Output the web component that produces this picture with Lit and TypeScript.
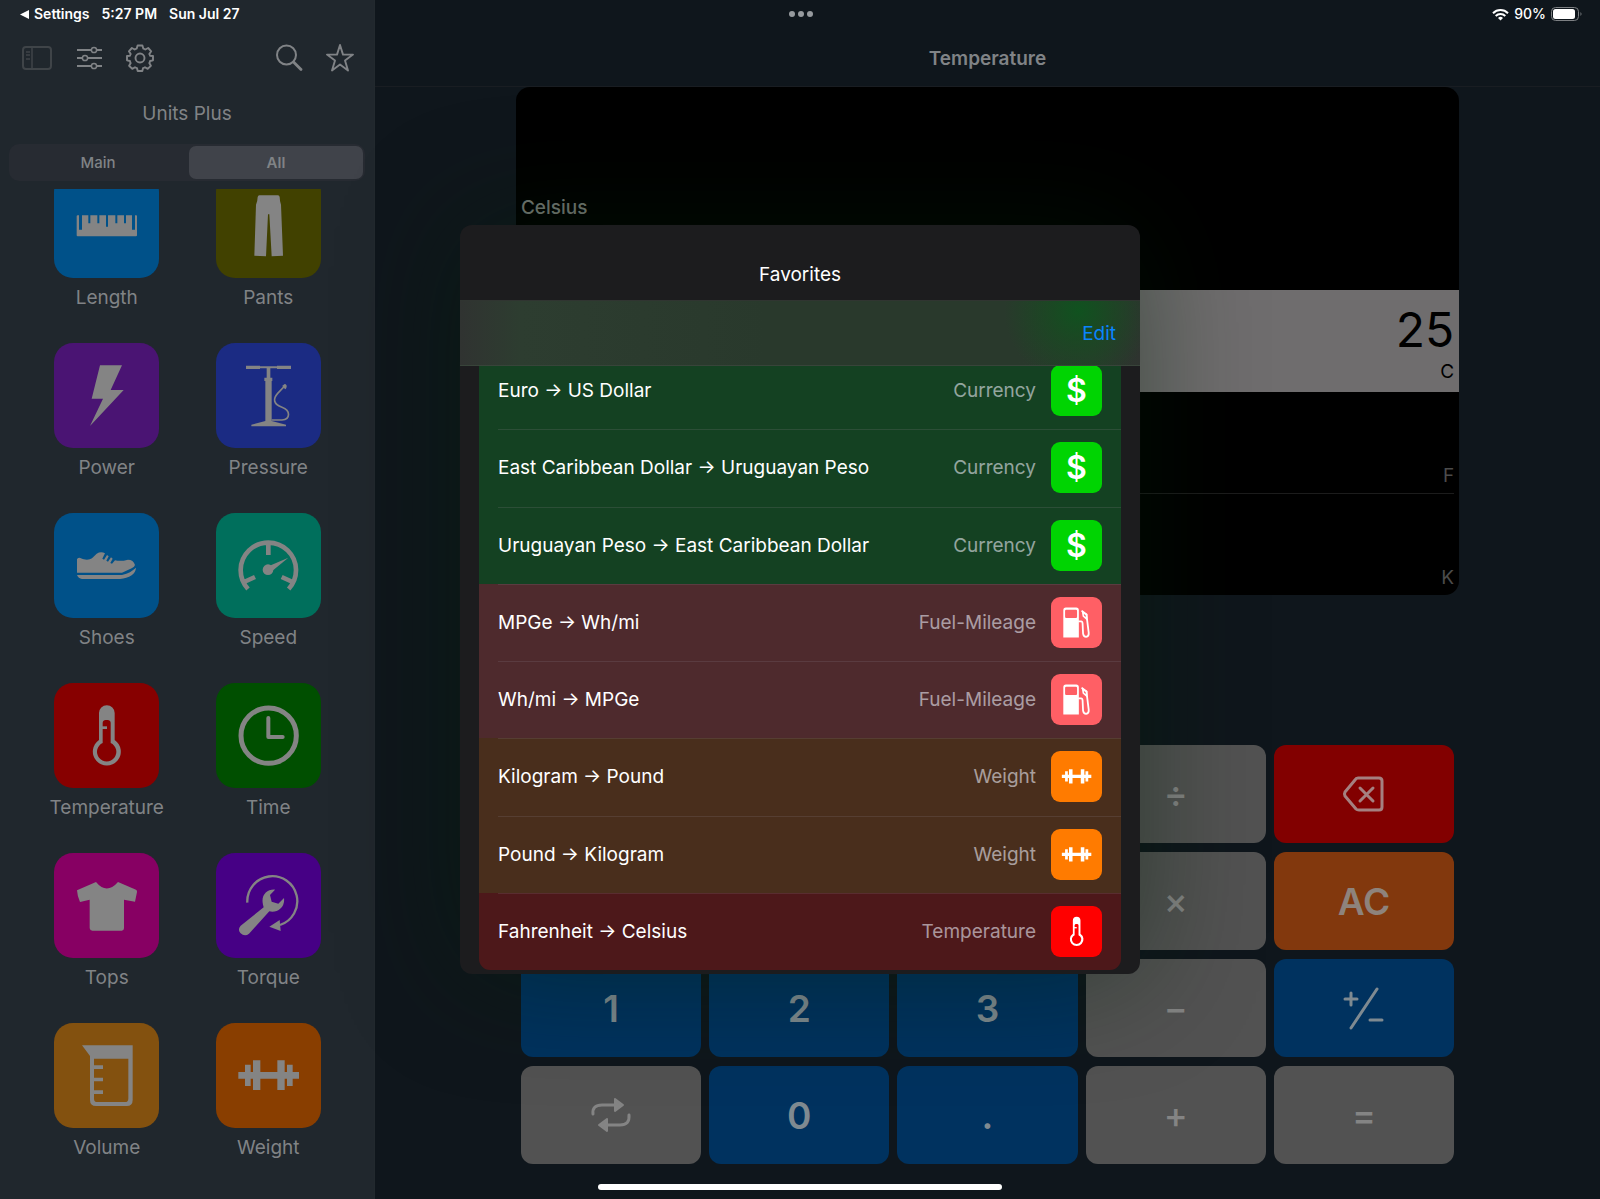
import { LitElement, html, css, svg, nothing, type TemplateResult, type SVGTemplateResult } from "lit";
import { customElement, property, state } from "lit/decorators.js";
import { classMap } from "lit/directives/class-map.js";

/* Glyphs share a 315-unit square, the same proportions on tiles and badges. */
const GLYPHS: Record<string, SVGTemplateResult> = {
  length: svg`<path d="M71 127H75V170H84V127H103V151H109V127H130V151H136V127H156V161H162V127H184V151H190V127H210V151H216V127H234V170H243V127H247Q249 127 249 130V187Q249 190 246 190H71Q68 190 68 187V130Q68 127 71 127Z"/>`,
  pants: svg`<path d="M130 67H186Q190 68 191 72Q191 82 195 95L201 248L167 250L160 124H156L150 250L115 248L120 95Q125 82 125 72Q126 68 130 67Z"/>`,
  power: svg`<path d="M138 67H204L170 141H209L108 249L147 167H113Z"/>`,
  pressure: svg`<path d="M90 68H132V70H183V68H225V78H183V76H163V104H169V114H167V234L210 245V250H106V245L148 234V114H145V104H152V76H132V78H90Z"/>
    <path d="M167 231H198C224 229 224 202 198 193C172 184 170 168 185 151L206 129" fill="none" stroke="currentColor" stroke-width="5"/>
    <path d="M199 128L206 123Q213 124 212 132L209 139L202 134Z"/>`,
  shoes: svg`<path d="M69 139Q71 133 79 135C93 142 106 141 114 136L128 122Q141 114 153 121L150 127L145 137L150 140L159 126L164 130L157 143L162 146L171 133L176 137L169 150L174 152L183 142Q200 146 222 140Q238 140 243 156Q242 162 233 166L204 179H69Z"/>
    <path d="M69 186H204C223 182 235 174 246 164Q245 178 233 187Q218 197 198 198H84Q73 196 69 186Z"/>`,
  speed: svg`<path d="M96 228A83 83 0 1 1 218 228M157 84V126M84 207L117 192M230 207L197 192" fill="none" stroke="currentColor" stroke-width="14"/>
    <circle cx="156" cy="170" r="16"/><path d="M152 162L217 134L164 178Z"/>`,
  temperature: svg`<path fill-rule="evenodd" d="M135 90A23 23 0 0 1 182 90V171A42 42 0 1 1 135 171ZM146 119V180A29 29 0 1 0 170 180V119Q169 111 161 111H155Q147 111 146 119Z"/><rect x="142" y="130" width="17" height="8"/>`,
  time: svg`<circle cx="158" cy="158" r="83" fill="none" stroke="currentColor" stroke-width="15"/>
    <path d="M157 105V162H200" fill="none" stroke="currentColor" stroke-width="12" stroke-linecap="round" stroke-linejoin="round"/>`,
  tops: svg`<path d="M126 87Q158 126 192 87L246 110Q250 112 249 117L243 146L210 140V226Q210 233 203 233H115Q108 233 107 226V140L78 147Q70 130 69 112Z"/>`,
  torque: svg`<path d="M94 149A75 75 0 1 1 192 216" fill="none" stroke="currentColor" stroke-width="7"/>
    <path d="M160 221L191 201L194 234Z"/>
    <path d="M177 110C153 108 134 127 141 155L143 163L74 218Q64 229 73 240Q86 252 99 242L160 175C182 181 208 164 204 135L187 152L167 146L162 126Z"/>`,
  volume: svg`<path fill-rule="evenodd" d="M84 67H236V231Q236 249 218 249H126Q108 249 108 231V99ZM120 107V227Q120 237 130 237H213Q223 237 223 227V107Z"/>
    <path d="M118 127H147V138H118ZM118 164H147V175H118ZM118 202H147V213H118Z"/>`,
  weight: svg`<path d="M67 147H87V125H104V147H111V112H133V147H184V112H206V147H213V125H230V147H249V167H230V189H213V167H206V201H184V167H133V201H111V167H104V189H87V167H67Z"/>`,
  fuel: svg`<path fill-rule="evenodd" d="M76 250V82Q76 65 92 65H156Q172 65 172 82V250ZM87 86V124Q87 129 92 129H156Q161 129 161 124V86Q161 78 154 78H94Q87 78 87 86Z"/>
    <path d="M168 150H186Q194 150 195 163L198 226Q201 246 217 246Q235 244 233 222L222 134L219 108L189 84" fill="none" stroke="currentColor" stroke-width="11"/>
    <path d="M196 94L220 108L220 136L200 118Z" fill="none" stroke="currentColor" stroke-width="10"/>`,
};

const glyph = (name: string) =>
  html`<svg viewBox="0 0 315 315" fill="currentColor" aria-hidden="true">${GLYPHS[name]}</svg>`;

const KEY_ICONS: Record<string, TemplateResult> = {
  backspace: html`<svg viewBox="0 0 44 44" width="44" height="44" fill="none" stroke="currentColor" stroke-width="3" stroke-linecap="round" stroke-linejoin="round">
    <path d="M16 6H37Q40 6 40 9V35Q40 38 37 38H17Q15 38 14 37L3 24Q2 22 3 20L13 8Q14 6 16 6ZM18 16L31 29M31 16L18 29"/></svg>`,
  sign: html`<svg viewBox="0 0 44 44" width="44" height="44" fill="none" stroke="currentColor" stroke-width="3" stroke-linecap="round">
    <path d="M35 3L9 42M3 13H15M9 7V19M28 34H40"/></svg>`,
  swap: html`<svg viewBox="0 0 44 44" width="44" height="44" fill="none" stroke="currentColor" stroke-width="3" stroke-linecap="round">
    <path d="M4 21Q3 12 13 12H26M40 22Q41 32 31 32H18"/>
    <path d="M26 6L34 12L26 18ZM18 26L10 32L18 38Z" fill="currentColor" stroke-width="2" stroke-linejoin="round"/></svg>`,
};

interface Category { label: string; icon: string; tone: string; }
interface Favorite { name: string; category: string; icon: string; }
interface Key { label: string; text?: string; icon?: string; kind: string; }

const CATEGORIES: Category[] = [
  { label: "Length", icon: "length", tone: "azure" },
  { label: "Pants", icon: "pants", tone: "olive" },
  { label: "Power", icon: "power", tone: "purple" },
  { label: "Pressure", icon: "pressure", tone: "indigo" },
  { label: "Shoes", icon: "shoes", tone: "azure" },
  { label: "Speed", icon: "speed", tone: "teal" },
  { label: "Temperature", icon: "temperature", tone: "red" },
  { label: "Time", icon: "time", tone: "green" },
  { label: "Tops", icon: "tops", tone: "magenta" },
  { label: "Torque", icon: "torque", tone: "violet" },
  { label: "Volume", icon: "volume", tone: "amber" },
  { label: "Weight", icon: "weight", tone: "orange" },
];

const FAVORITES: Favorite[] = [
  { name: "Euro → US Dollar", category: "Currency", icon: "currency" },
  { name: "East Caribbean Dollar → Uruguayan Peso", category: "Currency", icon: "currency" },
  { name: "Uruguayan Peso → East Caribbean Dollar", category: "Currency", icon: "currency" },
  { name: "MPGe → Wh/mi", category: "Fuel-Mileage", icon: "fuel" },
  { name: "Wh/mi → MPGe", category: "Fuel-Mileage", icon: "fuel" },
  { name: "Kilogram → Pound", category: "Weight", icon: "weight" },
  { name: "Pound → Kilogram", category: "Weight", icon: "weight" },
  { name: "Fahrenheit → Celsius", category: "Temperature", icon: "temperature" },
];

const KEY_ROWS: Key[][] = [
  [
    { label: "Divide", text: "÷", kind: "op" },
    { label: "Delete", icon: "backspace", kind: "delete" },
  ],
  [
    { label: "Multiply", text: "×", kind: "op" },
    { label: "All clear", text: "AC", kind: "clear" },
  ],
  [
    { label: "1", text: "1", kind: "digit" },
    { label: "2", text: "2", kind: "digit" },
    { label: "3", text: "3", kind: "digit" },
    { label: "Subtract", text: "−", kind: "op" },
    { label: "Change sign", icon: "sign", kind: "digit" },
  ],
  [
    { label: "Swap units", icon: "swap", kind: "op" },
    { label: "0", text: "0", kind: "digit" },
    { label: "Decimal point", text: ".", kind: "digit" },
    { label: "Add", text: "+", kind: "op" },
    { label: "Equals", text: "=", kind: "op" },
  ],
];

const reset = css`
  * { box-sizing: border-box; }
  button {
    font: inherit; color: inherit; background: none;
    border: 0; padding: 0; margin: 0; cursor: pointer;
  }
  svg { display: block; }
`;

@customElement("status-bar")
class StatusBar extends LitElement {
  static styles = [reset, css`
    :host {
      display: grid; grid-template-columns: 1fr auto 1fr; align-items: center;
      height: 28px; padding: 0 18px 0 20px;
      color: #fff; font-size: 14px; line-height: 16px; font-weight: 600;
    }
    .left, .right { display: flex; align-items: center; }
    .left { gap: 12px; }
    .back { display: flex; align-items: center; gap: 5px; }
    .dots { display: flex; gap: 3px; color: #969a9e; }
    .dot { width: 6px; height: 6px; border-radius: 50%; background: currentColor; }
    .right { justify-content: flex-end; gap: 5px; font-weight: 500; }
  `];
  render() {
    return html`
      <div class="left">
        <button class="back">
          <svg width="9" height="9" viewBox="0 0 9 9" fill="currentColor" aria-hidden="true"><path d="M9 0V9L0 4.500Z"/></svg>Settings
        </button>
        <span>5:27 PM</span><span>Sun Jul 27</span>
      </div>
      <div class="dots"><span class="dot"></span><span class="dot"></span><span class="dot"></span></div>
      <div class="right">
        <svg width="17" height="13" viewBox="0 0 17 13" fill="none" stroke="currentColor" stroke-width="2" aria-label="Wi-Fi">
          <path d="M1 5.200A10.600 10.600 0 0 1 16 5.200M3.700 8A6.800 6.800 0 0 1 13.300 8"/><path d="M8.500 12.600L6 9.900A3.600 3.600 0 0 1 11 9.900Z" fill="currentColor" stroke="none"/>
        </svg>
        <span>90%</span>
        <svg width="31" height="14" viewBox="0 0 31 14" aria-label="Battery">
          <rect x="0.500" y="0.500" width="27" height="13" rx="4" fill="none" stroke="#7d8083"/>
          <rect x="2" y="2" width="22" height="10" rx="2.500" fill="currentColor"/>
          <path d="M29.500 5Q31.500 7 29.500 9Z" fill="#7d8083"/>
        </svg>
      </div>`;
  }
}

@customElement("category-tile")
class CategoryTile extends LitElement {
  @property({ attribute: false }) category!: Category;
  static styles = [reset, css`
    :host { display: block; }
    .tile { display: flex; flex-direction: column; align-items: center; width: 100%; gap: 7px; }
    .art { width: 105px; height: 105px; border-radius: 19px; color: #848484; }
    .art svg { width: 100%; height: 100%; }
    .label { line-height: 26px; }
    .azure { background: #005189; } .olive { background: #414100; }
    .purple { background: #4a1473; } .indigo { background: #1b2b83; }
    .teal { background: #006f5c; } .red { background: #870000; }
    .green { background: #004f00; } .magenta { background: #870063; }
    .violet { background: #460085; } .amber { background: #83510f; }
    .orange { background: #893e00; }
  `];
  render() {
    const { label, icon, tone } = this.category;
    return html`<button class="tile">
      <span class=${classMap({ art: true, [tone]: true })}>${glyph(icon)}</span>
      <span class="label">${label}</span>
    </button>`;
  }
}

@customElement("unit-sidebar")
class UnitSidebar extends LitElement {
  @state() private filter = "All";
  static styles = [reset, css`
    :host {
      display: flex; flex-direction: column; min-height: 0;
      padding-top: 28px; background: #20272d; color: #808386; font-size: 19px;
      border-right: 1px solid #22292e;
    }
    .tools { display: flex; align-items: center; height: 60px; padding: 0 19px 0 22px; }
    .tools svg { width: 30px; height: 30px; fill: none; stroke: currentColor; stroke-width: 2px; }
    .group { display: flex; gap: 22px; }
    .group.end { margin-left: auto; gap: 20px; }
    .dim { color: #3f4448; }
    .title { margin: 0; line-height: 52px; text-align: center; font-size: 19px; font-weight: 400; }
    .segments {
      display: grid; grid-template-columns: 1fr 1fr; gap: 4px;
      margin: 4px 9px 8px; padding: 2px; height: 37px;
      background: #272b32; border-radius: 10px; font-size: 15px;
    }
    .segment { border-radius: 7px; font-weight: 500; }
    .segment.on { background: #40434a; font-weight: 600; }
    .scroll { flex: 1; min-height: 0; overflow-y: auto; scrollbar-width: none; }
    .grid {
      display: grid; grid-template-columns: 1fr 1fr; grid-auto-rows: 138px; row-gap: 32px;
      padding: 0 25px 64px 26px;
    }
  `];
  firstUpdated() {
    const scroll = this.renderRoot.querySelector(".scroll");
    if (scroll) scroll.scrollTop = 16;
  }
  render() {
    return html`
      <div class="tools">
        <div class="group">
          <button class="dim" aria-label="Toggle sidebar"><svg viewBox="0 0 30 30"><rect x="1" y="4" width="28" height="22" rx="3"/><path d="M10 4V26M4 9H8M4 12H8M4 16H8" stroke-width="1.500"/></svg></button>
          <button aria-label="Adjust"><svg viewBox="0 0 30 30"><path d="M3 7H17M23 7H28M3 15H8M14 15H28M3 23H17M23 23H28" stroke-width="1.800"/><circle cx="20" cy="7" r="2.600" stroke-width="1.500"/><circle cx="11" cy="15" r="2.600" stroke-width="1.500"/><circle cx="20" cy="23" r="2.600" stroke-width="1.500"/></svg></button>
          <button aria-label="Preferences"><svg viewBox="0 0 30 30"><g stroke-width="1.900" stroke-linejoin="round"><circle cx="14" cy="15" r="4.500"/><path d="M11.600 2.500H16.400L17.300 5.600Q18.600 6 19.300 6.500L22.200 5L25.200 8.300L23.300 11Q24 12 24.100 12.900L27 13V17.300L24.100 18Q23.800 19.200 23.300 20.100L24.900 22.800L21.700 25.900L19 24.300Q18 24.900 17 25.200L16.300 28H11.700L11 25.200Q10 24.900 9 24.300L6.300 25.900L3.100 22.800L4.700 20.100Q4.200 19.200 3.900 18L1 17.300V13L3.900 12.900Q4.100 12 4.700 11L2.900 8.300L5.900 5L8.700 6.500Q9.600 5.900 10.700 5.600Z"/></g></svg></button>
        </div>
        <div class="group end">
          <button aria-label="Search"><svg viewBox="0 0 30 30"><circle cx="11.500" cy="12" r="9.500"/><path d="M18.500 19L26 26.500" stroke-width="2.800" stroke-linecap="round"/></svg></button>
          <button aria-label="Favorites"><svg viewBox="0 0 30 30"><path d="M15 2L18 11.600H28L20 17.400L23 27.500L15 21.500L7 27.500L10 17.400L2 11.600H12Z" stroke-width="1.900" stroke-linejoin="round"/></svg></button>
        </div>
      </div>
      <h1 class="title">Units Plus</h1>
      <div class="segments">
        ${["Main", "All"].map((name) => html`<button
          class=${classMap({ segment: true, on: name === this.filter })}
          aria-pressed=${name === this.filter}
          @click=${() => (this.filter = name)}>${name}</button>`)}
      </div>
      <div class="scroll"><div class="grid">
        ${CATEGORIES.map((c) => html`<category-tile .category=${c}></category-tile>`)}
      </div></div>`;
  }
}

@customElement("unit-converter")
class UnitConverter extends LitElement {
  static styles = [reset, css`
    :host { display: flex; flex-direction: column; min-width: 0; background: #0f161c; color: #808386; }
    .bar { height: 87px; padding-top: 30px; border-bottom: 1px solid #191d22; display: grid; place-items: center; }
    .heading { margin: 0; font-size: 19px; font-weight: 600; }
    .content { flex: 1; display: flex; flex-direction: column; width: 77%; margin: 0 auto; padding-bottom: 35px; }
    .display {
      display: grid; grid-template-rows: 203px 102px 101px 102px;
      background: #000; border-radius: 14px; overflow: hidden;
    }
    .source { padding: 108px 5px 0; line-height: 26px; font-size: 19px; font-weight: 500; color: #757975; }
    .unit {
      display: flex; flex-direction: column; justify-content: flex-end; align-items: flex-end;
      margin: 0 5px; padding-bottom: 4px; font-size: 19px; line-height: 26px; color: #4c4c4c;
    }
    .unit + .unit.ruled { border-top: 1px solid #1c1c1c; }
    .unit.selected { margin: 0; padding: 0 5px 7px; background: #6f6d6e; color: #000; }
    .value { font-size: 48px; line-height: 58px; }
    .keys {
      display: grid; grid-template-columns: repeat(5, 1fr); grid-auto-rows: 98px; gap: 9px 8px;
      margin: auto 5px 0;
    }
    .key {
      display: grid; place-items: center; border-radius: 12px;
      font-size: 37px; font-weight: 600; color: #848484;
    }
    .skip { grid-column: 4; }
    .op { background: #525252; font-size: 36px; font-weight: 500; }
    .digit { background: #00325f; color: #7f8a91; }
    .delete { background: #820000; color: #a58080; }
    .clear { background: #82380d; color: #8e837c; }
  `];
  render() {
    return html`
      <header class="bar"><h2 class="heading">Temperature</h2></header>
      <div class="content">
        <div class="display">
          <div class="source">Celsius</div>
          <div class="unit selected"><output class="value">25</output><span>C</span></div>
          <div class="unit">F</div>
          <div class="unit ruled">K</div>
        </div>
        <div class="keys">
          ${KEY_ROWS.map((row) => row.map((key, i) => html`<button
            class=${classMap({ key: true, [key.kind]: true, skip: i === 0 && row.length < 5 })}
            aria-label=${key.label}>${key.icon ? KEY_ICONS[key.icon] : key.text}</button>`))}
        </div>
      </div>`;
  }
}

@customElement("favorites-sheet")
class FavoritesSheet extends LitElement {
  static styles = [reset, css`
    :host {
      display: flex; flex-direction: column; width: min(680px, 90vw); height: min(749px, 90vh);
      border-radius: 12px; overflow: hidden; background: #1c1c1e; color: #fff; font-size: 19px;
      box-shadow: 0 0 120px rgba(4, 30, 8, 0.45);
    }
    .head { flex: none; display: grid; place-items: center; height: 75px; padding-top: 23px; }
    .title { margin: 0; font-size: 19px; font-weight: 400; }
    .toolbar {
      flex: none; position: relative; z-index: 1;
      display: flex; align-items: center; justify-content: flex-end;
      height: 66px; padding: 0 24px; color: #0a84ff;
      border-top: 1px solid #303531; border-bottom: 1px solid #38443a;
      background:
        radial-gradient(circle at 91% 15%, #10521f 0, rgba(22, 76, 32, 0.7) 5%, transparent 12%),
        linear-gradient(90deg, #303331 0, #2d3d30 9%, #29392c 45%, #29392c 82%, #2a3a2d 93%, #2e332f 100%);
    }
    .list {
      flex: 1; display: grid; grid-auto-rows: 1fr;
      margin: -14px 19px 4px; padding: 0; list-style: none;
      border-radius: 0 0 11px 11px; overflow: hidden;
    }
    .row { display: flex; align-items: center; gap: 15px; padding: 0 19px; position: relative; }
    .row + .row::before {
      content: ""; position: absolute; top: 0; left: 19px; right: 0; height: 1px;
      background: rgba(140, 130, 140, 0.2);
    }
    .name { flex: 1; }
    .category { color: rgba(235, 235, 245, 0.6); }
    .badge { width: 51px; height: 51px; border-radius: 9px; display: grid; place-items: center; color: #fff; }
    .badge svg { width: 51px; height: 51px; }
    .sign { font-size: 32px; line-height: 51px; font-weight: 600; }
    .row.currency { background: #144122; } .currency .badge { background: #00d402; }
    .row.fuel { background: #4e2a2d; } .fuel .badge { background: #ff5f65; }
    .row.weight { background: #492e1c; } .weight .badge { background: #ff7b00; }
    .row.temperature { background: #4d181a; } .temperature .badge { background: #ff0000; }
  `];
  render() {
    return html`
      <header class="head"><h2 class="title">Favorites</h2></header>
      <div class="toolbar"><button>Edit</button></div>
      <ul class="list">
        ${FAVORITES.map((f) => html`<li class=${classMap({ row: true, [f.icon]: true })}>
          <span class="name">${f.name}</span>
          <span class="category">${f.category}</span>
          <span class="badge">${f.icon === "currency" ? html`<span class="sign">$</span>` : glyph(f.icon)}</span>
        </li>`)}
      </ul>`;
  }
}

@customElement("app-root")
class AppRoot extends LitElement {
  @property({ type: Boolean }) sheetOpen = true;
  static styles = [reset, css`
    :host { display: block; font-family: Inter, "Liberation Sans", sans-serif; background: #0f161c; }
    .shell { position: relative; display: grid; grid-template-columns: 375px 1fr; height: 100vh; overflow: hidden; }
    .status { position: absolute; inset: 0 0 auto; }
    .overlay { position: absolute; inset: 0; display: grid; place-items: center; }
    .home {
      position: absolute; bottom: 9px; left: 50%; transform: translateX(-50%);
      width: 404px; height: 6px; border-radius: 3px; background: #fff;
    }
  `];
  render() {
    return html`<div class="shell">
      <unit-sidebar></unit-sidebar>
      <unit-converter></unit-converter>
      <status-bar class="status"></status-bar>
      ${this.sheetOpen ? html`<div class="overlay"><favorites-sheet role="dialog" aria-label="Favorites"></favorites-sheet></div>` : nothing}
      <div class="home"></div>
    </div>`;
  }
}
